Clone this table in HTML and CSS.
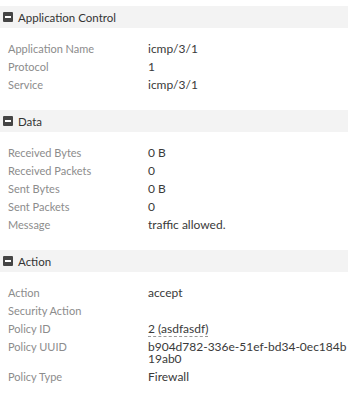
FILE: index.html
```
<!DOCTYPE html>
<html lang="en">
<head>
    <meta charset="UTF-8">
    <meta name="viewport" content="width=device-width, initial-scale=1.0">
    <title>Log Details</title>
    <link rel="stylesheet" href="styles.css">
</head>
<body>
    <div class="details">
        <!-- Application Control -->
        <div class="section">
            <div class="section-head">
                <svg class="toggle" viewBox="0 0 10 10"><rect width="10" height="10" rx="1" fill="#454545"/><rect x="2" y="4" width="6" height="2" fill="#fff"/></svg>
                <span>Application Control</span>
            </div>
            <div class="section-body">
                <div class="row"><span class="label">Application Name</span><span class="value">icmp/3/1</span></div>
                <div class="row"><span class="label">Protocol</span><span class="value">1</span></div>
                <div class="row"><span class="label">Service</span><span class="value">icmp/3/1</span></div>
            </div>
        </div>

        <!-- Data -->
        <div class="section">
            <div class="section-head">
                <svg class="toggle" viewBox="0 0 10 10"><rect width="10" height="10" rx="1" fill="#454545"/><rect x="2" y="4" width="6" height="2" fill="#fff"/></svg>
                <span>Data</span>
            </div>
            <div class="section-body">
                <div class="row"><span class="label">Received Bytes</span><span class="value">0 B</span></div>
                <div class="row"><span class="label">Received Packets</span><span class="value">0</span></div>
                <div class="row"><span class="label">Sent Bytes</span><span class="value">0 B</span></div>
                <div class="row"><span class="label">Sent Packets</span><span class="value">0</span></div>
                <div class="row"><span class="label">Message</span><span class="value">traffic allowed.</span></div>
            </div>
        </div>

        <!-- Action -->
        <div class="section">
            <div class="section-head">
                <svg class="toggle" viewBox="0 0 10 10"><rect width="10" height="10" rx="1" fill="#454545"/><rect x="2" y="4" width="6" height="2" fill="#fff"/></svg>
                <span>Action</span>
            </div>
            <div class="section-body">
                <div class="row"><span class="label">Action</span><span class="value">accept</span></div>
                <div class="row"><span class="label">Security Action</span><span class="value"></span></div>
                <div class="row"><span class="label">Policy ID</span><span class="value"><span class="link">2 (asdfasdf)</span></span></div>
                <div class="row"><span class="label">Policy UUID</span><span class="value">b904d782-336e-51ef-bd34-0ec184b19ab0</span></div>
                <div class="row"><span class="label">Policy Type</span><span class="value">Firewall</span></div>
            </div>
        </div>
    </div>
</body>
</html>
```
FILE: styles.css
```
body {
    margin: 0;
    font-family: Lato, "Open Sans", sans-serif;
    font-size: 12px;
    color: #333;
    background: #fff;
}
.details {
    padding-top: 6px;
}
.section-head {
    display: flex;
    align-items: center;
    gap: 5px;
    height: 22px;
    padding-left: 3px;
    background: #f3f3f3;
    font-size: 11.5px;
    color: #333;
}
.toggle {
    width: 10px;
    height: 10px;
}
.section-body {
    padding: 12px 0 16px 8px;
}
.row {
    display: grid;
    grid-template-columns: 140px 1fr;
    padding: 3px 0;
    line-height: 12px;
}
.label {
    color: #8c8c8c;
    font-size: 11px;
}
.value {
    color: #3a3a3a;
    word-break: break-all;
}
.link {
    border-bottom: 1px dashed #999;
}
```
